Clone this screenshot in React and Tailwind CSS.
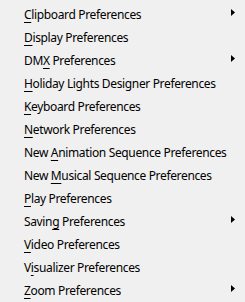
import React from 'react';

const items = [
  { pre: '', key: 'C', post: 'lipboard Preferences', sub: true },
  { pre: '', key: 'D', post: 'isplay Preferences' },
  { pre: 'DM', key: 'X', post: ' Preferences', sub: true },
  { pre: '', key: 'H', post: 'oliday Lights Designer Preferences' },
  { pre: '', key: 'K', post: 'eyboard Preferences' },
  { pre: '', key: 'N', post: 'etwork Preferences' },
  { pre: 'New ', key: 'A', post: 'nimation Sequence Preferences' },
  { pre: 'New ', key: 'M', post: 'usical Sequence Preferences' },
  { pre: '', key: 'P', post: 'lay Preferences' },
  { pre: 'Savin', key: 'g', post: ' Preferences', sub: true },
  { pre: '', key: 'V', post: 'ideo Preferences' },
  { pre: 'V', key: 'i', post: 'sualizer Preferences' },
  { pre: '', key: 'Z', post: 'oom Preferences', sub: true },
];

function Arrow() {
  return (
    <svg width="4" height="7" viewBox="0 0 4 7" className="mb-[5px]">
      <path d="M0 0 L4 3.5 L0 7 Z" fill="#000" />
    </svg>
  );
}

export default function App() {
  return (
    <div className="w-[245px] h-[302px] bg-[#f0f0f0] pt-[3px] overflow-hidden font-['Noto_Sans',sans-serif] text-[12px] tracking-[-0.35px] text-black">
      {items.map((it, i) => (
        <div key={i} className="flex h-[23px] items-center pl-[24px] pr-[10px]">
          <span className="flex-1 whitespace-nowrap leading-none">
            {it.pre}
            <span className="underline underline-offset-[3px]">{it.key}</span>
            {it.post}
          </span>
          {it.sub && <Arrow />}
        </div>
      ))}
    </div>
  );
}
